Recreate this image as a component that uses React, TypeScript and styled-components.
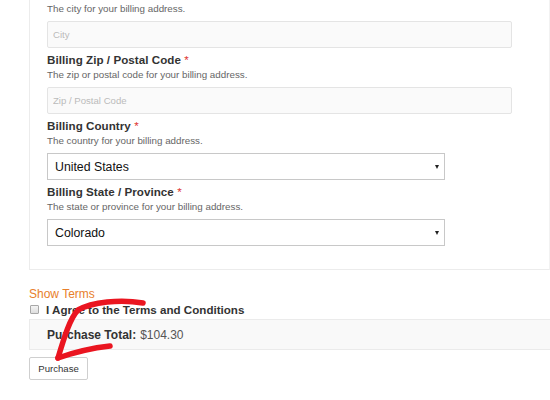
import React from "react";
import styled, { createGlobalStyle } from "styled-components";

const Global = createGlobalStyle`
  html, body { margin: 0; padding: 0; background: #fff; overflow: hidden; }
  body { font-family: "Liberation Sans", Arial, sans-serif; }
`;

const Page = styled.div`
  position: relative;
  width: 550px;
  height: 400px;
  overflow: hidden;
  padding-left: 29px;
  box-sizing: border-box;
`;

const Panel = styled.div`
  margin-top: -1px;
  border: 1px solid #ececec;
  border-right-color: #f2f2f2;
  padding: 2px 0 23px 17px;
  background: #fff;
`;

const Field = styled.div`
  margin-top: 4px;
  &:first-child { margin-top: 0; }
`;

const Label = styled.div`
  font-size: 11.6px;
  line-height: 16px;
  font-weight: bold;
  color: #333;
  letter-spacing: 0.05px;
`;

const Req = styled.span`
  color: #d33;
  font-weight: normal;
`;

const Desc = styled.div`
  font-size: 9.8px;
  line-height: 14px;
  color: #666;
`;

const TextInput = styled.input`
  display: block;
  box-sizing: border-box;
  margin-top: 5px;
  width: 465px;
  height: 27px;
  padding: 0 5px;
  border: 1px solid #e4e4e4;
  border-radius: 2px;
  background: #fafafa;
  font-family: "Liberation Sans", Arial, sans-serif;
  font-size: 9.6px;
  color: #333;
  outline: none;
  &::placeholder { color: #bbb; }
`;

const SelectWrap = styled.div`
  position: relative;
  margin-top: 5px;
  width: 398px;
  &::after {
    content: "";
    position: absolute;
    right: 6px;
    top: 12px;
    border-left: 2.5px solid transparent;
    border-right: 2.5px solid transparent;
    border-top: 4px solid #222;
    pointer-events: none;
  }
`;

const Select = styled.select`
  display: block;
  appearance: none;
  -webkit-appearance: none;
  box-sizing: border-box;
  width: 100%;
  height: 27px;
  padding: 0 7px;
  border: 1px solid #c8c8c8;
  border-radius: 0;
  background: #fff;
  font-family: "Liberation Sans", Arial, sans-serif;
  font-size: 12.3px;
  color: #111;
  outline: none;
`;

const ShowTerms = styled.a`
  display: block;
  margin-top: 17px;
  font-size: 12px;
  line-height: 14px;
  color: #e8802c;
  text-decoration: none;
`;

const AgreeRow = styled.label`
  display: flex;
  align-items: center;
  gap: 7px;
  margin-top: 2px;
  height: 13px;
  font-size: 11.6px;
  font-weight: bold;
  color: #333;
`;

const Check = styled.input`
  appearance: none;
  -webkit-appearance: none;
  margin: 0 0 0 1px;
  width: 9px;
  height: 9px;
  border: 1px solid #a8a8a8;
  border-radius: 1px;
  background: linear-gradient(#f4f4f4, #dedede);
  box-sizing: border-box;
`;

const TotalBar = styled.div`
  margin-top: 3px;
  height: 31px;
  box-sizing: border-box;
  border: 1px solid #ebebeb;
  border-right: none;
  background: #f9f9f9;
  display: flex;
  align-items: center;
  padding-left: 17px;
  font-size: 12px;
  color: #555;
`;

const TotalLabel = styled.strong`
  color: #333;
  margin-right: 4px;
`;

const Button = styled.button`
  display: block;
  margin-top: 7px;
  width: 59px;
  height: 23px;
  padding: 0;
  border: 1px solid #cfcfcf;
  border-radius: 2px;
  background: #fff;
  font-family: "Liberation Sans", Arial, sans-serif;
  font-size: 9.6px;
  color: #333;
`;

const Arrow = styled.svg`
  position: absolute;
  left: 0;
  top: 0;
  pointer-events: none;
`;

const fields: { label?: string; desc: string; kind: "input" | "select"; value: string }[] = [
  { desc: "The city for your billing address.", kind: "input", value: "City" },
  { label: "Billing Zip / Postal Code", desc: "The zip or postal code for your billing address.", kind: "input", value: "Zip / Postal Code" },
  { label: "Billing Country", desc: "The country for your billing address.", kind: "select", value: "United States" },
  { label: "Billing State / Province", desc: "The state or province for your billing address.", kind: "select", value: "Colorado" },
];

export default function App() {
  return (
    <>
      <Global />
      <Page>
        <Panel>
          {fields.map((f) => (
            <Field key={f.desc}>
              {f.label && (
                <Label>
                  {f.label} <Req>*</Req>
                </Label>
              )}
              <Desc>{f.desc}</Desc>
              {f.kind === "input" ? (
                <TextInput placeholder={f.value} />
              ) : (
                <SelectWrap>
                  <Select defaultValue={f.value}>
                    <option>{f.value}</option>
                  </Select>
                </SelectWrap>
              )}
            </Field>
          ))}
        </Panel>
        <ShowTerms href="#">Show Terms</ShowTerms>
        <AgreeRow>
          <Check type="checkbox" />
          I Agree to the Terms and Conditions
        </AgreeRow>
        <TotalBar>
          <TotalLabel>Purchase Total:</TotalLabel>$104.30
        </TotalBar>
        <Button>Purchase</Button>
        <Arrow width="550" height="400" viewBox="0 0 550 400">
          <g fill="none" stroke="#ea1520" strokeLinecap="round" strokeLinejoin="round">
            <path d="M143 303 C120 299 92 302 78 310 C70 318 64 338 58 358" strokeWidth="5.5" />
            <path d="M58 358 C75 352 92 348 110 346" strokeWidth="5.5" />
          </g>
        </Arrow>
      </Page>
    </>
  );
}
